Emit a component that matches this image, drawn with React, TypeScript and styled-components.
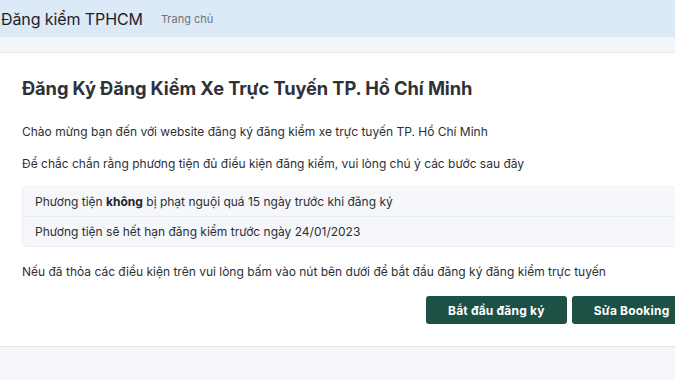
import styled, { createGlobalStyle } from "styled-components";

const GlobalStyle = createGlobalStyle`
  html, body {
    margin: 0;
    padding: 0;
    background: #f4f6f9;
    overflow: hidden;
  }
  body {
    font-family: "Inter", "Noto Sans", sans-serif;
    color: #2b2f36;
  }
`;

const Page = styled.div`
  width: 720px;
  height: 380px;
  display: flex;
  flex-direction: column;
  background: #f4f6f9;
`;

const Header = styled.header`
  height: 37px;
  background: #dce9f6;
  display: flex;
  align-items: center;
  gap: 18px;
  padding: 0 0 0 1px;
`;

const Brand = styled.div`
  font-size: 16px;
  color: #1f2329;
  letter-spacing: -0.1px;
`;

const NavLink = styled.a`
  font-size: 11px;
  color: #6f747b;
  text-decoration: none;
`;

const Strip = styled.div`
  height: 15px;
  background: #f3f6f9;
  border-bottom: 1px solid #e3e6ea;
`;

const Card = styled.section`
  background: #ffffff;
  height: 294px;
  padding: 24px 0 0 22px;
  box-sizing: border-box;
  border-bottom: 1px solid #e2e7ee;
`;

const Title = styled.h1`
  margin: 0 0 25px;
  font-size: 18.3px;
  line-height: 22px;
  font-weight: 700;
  color: #2f3237;
  letter-spacing: -0.1px;
`;

const Text = styled.p<{ $gap?: number }>`
  margin: 0 0 ${(p) => p.$gap ?? 16}px;
  font-size: 12px;
  line-height: 16px;
  color: #2b2f36;
`;

const List = styled.ul`
  list-style: none;
  margin: 0 0 17px;
  padding: 0;
  background: #f5f7fa;
  border-radius: 4px;
  border: 1px solid #eef1f5;
`;

const Item = styled.li<{ $last?: boolean }>`
  height: 29px;
  display: flex;
  align-items: center;
  padding-left: 12px;
  font-size: 12px;
  color: #2b2f36;
  border-bottom: ${(p) => (p.$last ? "none" : "1px solid #e9edf2")};

  b {
    font-weight: 700;
    color: #1f2329;
  }
`;

const Actions = styled.div`
  display: flex;
  gap: 5px;
  padding-left: 404px;
  margin-top: 11px;
`;

const Button = styled.button`
  height: 28px;
  padding: 0 22px;
  border: none;
  border-radius: 3px;
  background: #1d5145;
  color: #ffffff;
  font-family: inherit;
  font-size: 12px;
  font-weight: 700;
  letter-spacing: 0.2px;
  white-space: nowrap;
  cursor: pointer;
`;

export default function App() {
  return (
    <Page>
      <GlobalStyle />
      <Header>
        <Brand>Đăng kiểm TPHCM</Brand>
        <NavLink href="#">Trang chủ</NavLink>
      </Header>
      <Strip />
      <Card>
        <Title>Đăng Ký Đăng Kiểm Xe Trực Tuyến TP. Hồ Chí Minh</Title>
        <Text>Chào mừng bạn đến với website đăng ký đăng kiểm xe trực tuyến TP. Hồ Chí Minh</Text>
        <Text $gap={14}>Để chắc chắn rằng phương tiện đủ điều kiện đăng kiểm, vui lòng chú ý các bước sau đây</Text>
        <List>
          <Item>
            <span>
              Phương tiện <b>không</b> bị phạt nguội quá 15 ngày trước khi đăng ký
            </span>
          </Item>
          <Item $last>Phương tiện sẽ hết hạn đăng kiểm trước ngày 24/01/2023</Item>
        </List>
        <Text>Nếu đã thỏa các điều kiện trên vui lòng bấm vào nút bên dưới để bắt đầu đăng ký đăng kiểm trực tuyến</Text>
        <Actions>
          <Button>Bắt đầu đăng ký</Button>
          <Button>Sửa Booking</Button>
        </Actions>
      </Card>
    </Page>
  );
}
